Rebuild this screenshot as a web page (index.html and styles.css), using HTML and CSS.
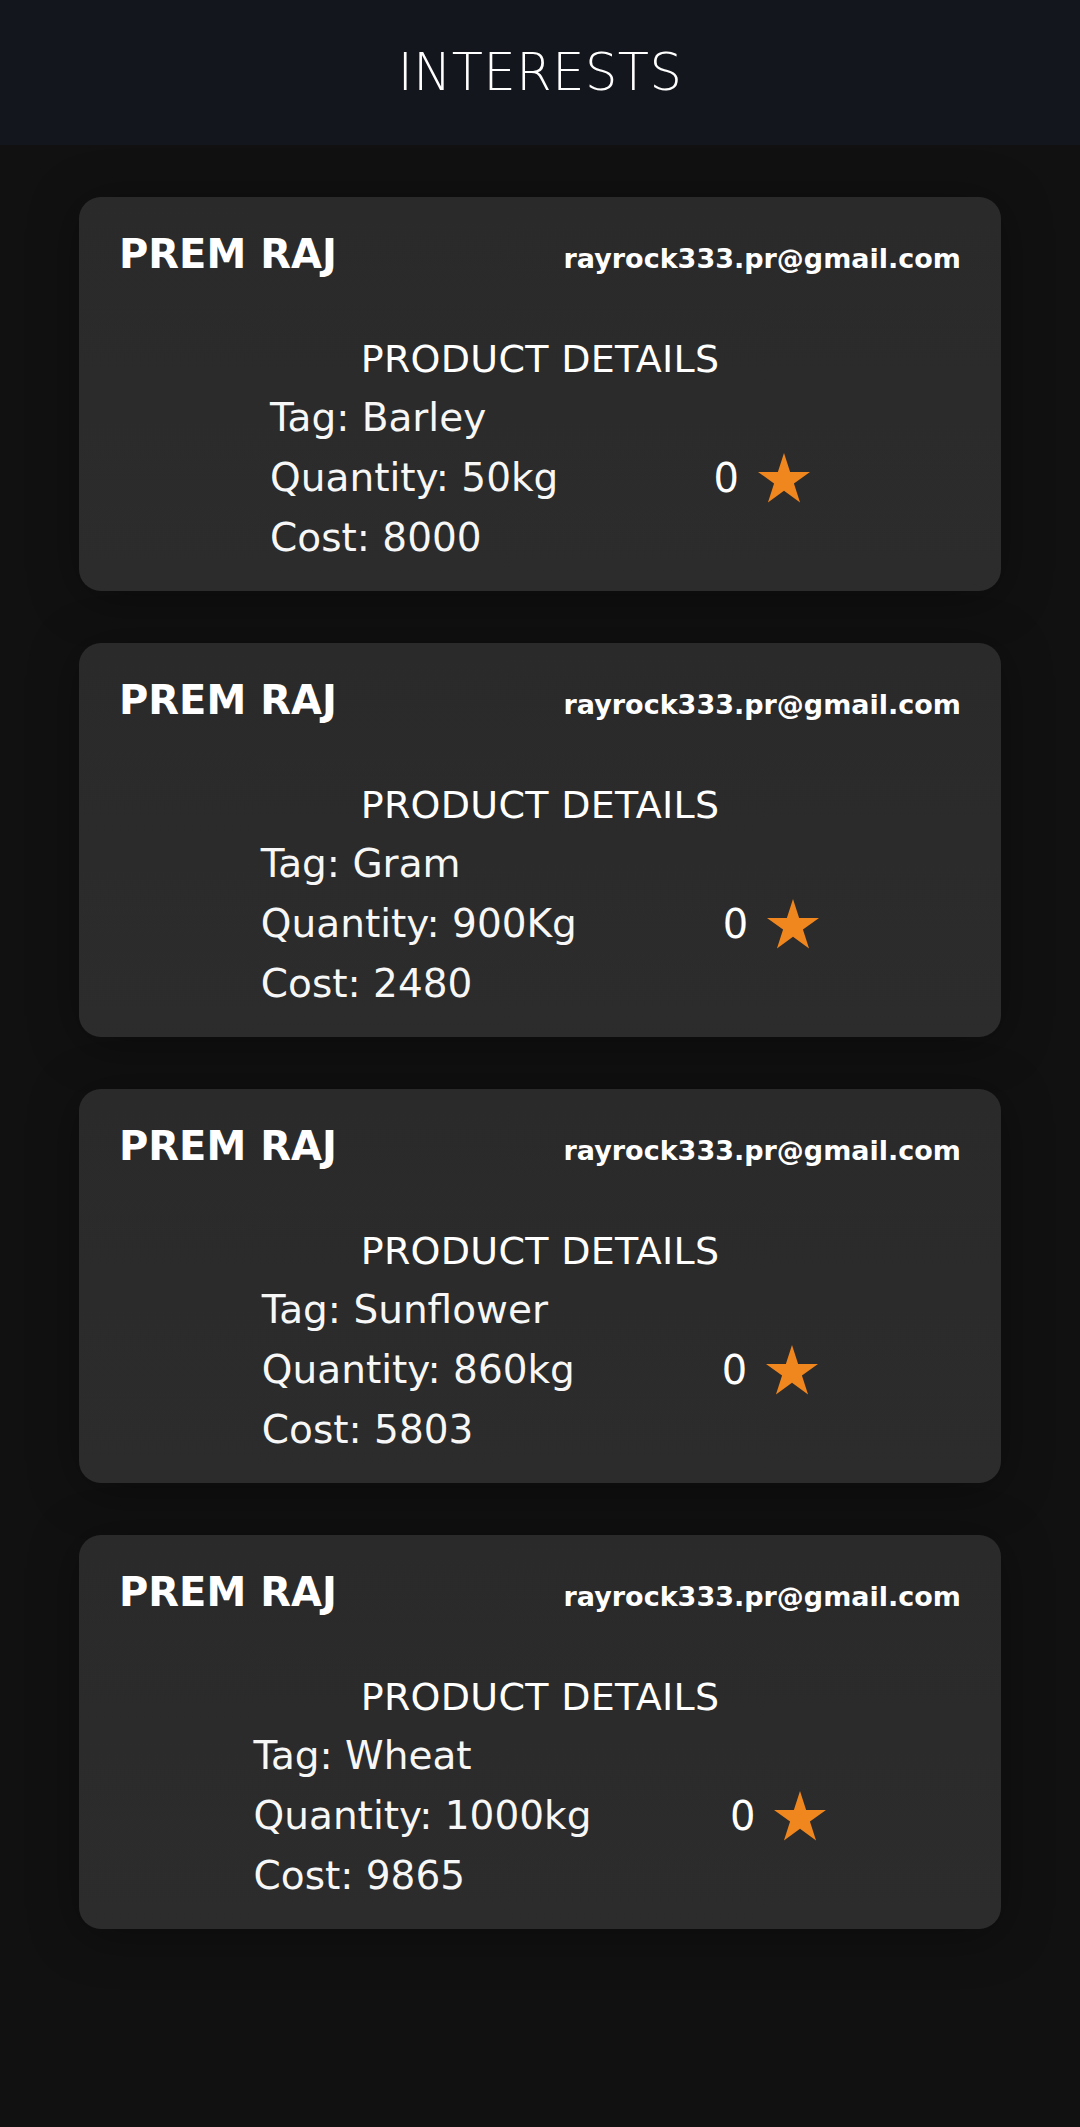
FILE: index.html
```html
<!DOCTYPE html>
<html lang="en">
<head>
<meta charset="utf-8">
<title>Interests</title>
<link rel="stylesheet" href="styles.css">
</head>
<body>
<header class="topbar"><h1 class="topbar-title">INTERESTS</h1></header>
<main class="list">
  <section class="card">
    <div class="card-head"><span class="name">PREM RAJ</span><span class="email">rayrock333.pr@gmail.com</span></div>
    <div class="card-title">PRODUCT DETAILS</div>
    <div class="card-body">
      <div class="details"><div>Tag: Barley</div><div>Quantity: 50kg</div><div>Cost: 8000</div></div>
      <div class="rating"><span class="count">0</span><svg class="star" viewBox="0 0 52 50" width="52" height="50"><polygon points="26,0 32.14,18.89 52,18.89 35.93,30.57 42.07,49.46 26,37.78 9.93,49.46 16.07,30.57 0,18.89 19.86,18.89"/></svg></div>
    </div>
  </section>
  <section class="card">
    <div class="card-head"><span class="name">PREM RAJ</span><span class="email">rayrock333.pr@gmail.com</span></div>
    <div class="card-title">PRODUCT DETAILS</div>
    <div class="card-body">
      <div class="details"><div>Tag: Gram</div><div>Quantity: 900Kg</div><div>Cost: 2480</div></div>
      <div class="rating"><span class="count">0</span><svg class="star" viewBox="0 0 52 50" width="52" height="50"><polygon points="26,0 32.14,18.89 52,18.89 35.93,30.57 42.07,49.46 26,37.78 9.93,49.46 16.07,30.57 0,18.89 19.86,18.89"/></svg></div>
    </div>
  </section>
  <section class="card">
    <div class="card-head"><span class="name">PREM RAJ</span><span class="email">rayrock333.pr@gmail.com</span></div>
    <div class="card-title">PRODUCT DETAILS</div>
    <div class="card-body">
      <div class="details"><div>Tag: Sunflower</div><div>Quantity: 860kg</div><div>Cost: 5803</div></div>
      <div class="rating"><span class="count">0</span><svg class="star" viewBox="0 0 52 50" width="52" height="50"><polygon points="26,0 32.14,18.89 52,18.89 35.93,30.57 42.07,49.46 26,37.78 9.93,49.46 16.07,30.57 0,18.89 19.86,18.89"/></svg></div>
    </div>
  </section>
  <section class="card">
    <div class="card-head"><span class="name">PREM RAJ</span><span class="email">rayrock333.pr@gmail.com</span></div>
    <div class="card-title">PRODUCT DETAILS</div>
    <div class="card-body">
      <div class="details"><div>Tag: Wheat</div><div>Quantity: 1000kg</div><div>Cost: 9865</div></div>
      <div class="rating"><span class="count">0</span><svg class="star" viewBox="0 0 52 50" width="52" height="50"><polygon points="26,0 32.14,18.89 52,18.89 35.93,30.57 42.07,49.46 26,37.78 9.93,49.46 16.07,30.57 0,18.89 19.86,18.89"/></svg></div>
    </div>
  </section>
</main>
</body>
</html>
```
FILE: styles.css
```css
* { box-sizing: border-box; }
html, body { margin: 0; padding: 0; }
body {
  background: #111111;
  color: #ffffff;
  font-family: "DejaVu Sans", "Open Sans", sans-serif;
  min-height: 100vh;
}
.topbar {
  height: 145px;
  background: #13161d;
  display: flex;
  align-items: center;
  justify-content: center;
}
.topbar-title {
  margin: 0;
  font-size: 51px;
  font-weight: 200;
  letter-spacing: 0.5px;
  color: #ffffff;
}
.list {
  display: flex;
  flex-direction: column;
  gap: 52px;
  padding: 52px 79px 0;
}
.card {
  height: 394px;
  background: linear-gradient(#2a2a2a, #2c2c2c);
  border-radius: 22px;
  padding: 34px 40px 23px;
  box-shadow: 0 6px 50px rgba(0, 0, 0, 0.35);
}
.card-head {
  display: flex;
  justify-content: space-between;
  align-items: baseline;
  line-height: 47px;
  height: 47px;
}
.name {
  font-size: 40px;
  font-weight: 700;
}
.email {
  font-size: 27px;
  font-weight: 700;
}
.card-title {
  margin-top: 59px;
  text-align: center;
  font-size: 38px;
  line-height: 44px;
  letter-spacing: 0.3px;
}
.card-body {
  margin: 7px -4px 0;
  display: flex;
  justify-content: space-evenly;
  align-items: center;
}
.details {
  font-size: 39px;
  line-height: 60px;
  color: #f7f7f7;
}
.rating {
  display: flex;
  align-items: center;
  gap: 19px;
}
.count {
  font-size: 40px;
  line-height: 48px;
}
.star {
  display: block;
  fill: #f0861e;
}
```
